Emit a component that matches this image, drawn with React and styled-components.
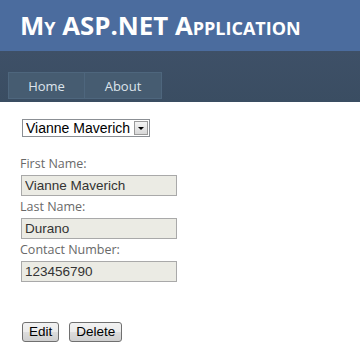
import React from 'react';
import styled, { createGlobalStyle } from 'styled-components';

const GlobalStyle = createGlobalStyle`
  html, body {
    margin: 0;
    padding: 0;
    background: #fff;
  }
  body {
    font-family: "Open Sans", "DejaVu Sans", sans-serif;
  }
`

const Header = styled.div`
  height: 51px;
  background: #4b6c9e;
  display: flex;
  align-items: flex-start;
`

const Title = styled.h1`
  margin: 0;
  padding: 8px 0 0 20px;
  color: #fff;
  font-family: "Open Sans", sans-serif;
  font-weight: 700;
  font-size: 25.8px;
  line-height: 34px;
  font-variant: small-caps;
`

const MenuBar = styled.div`
  height: 51px;
  background: linear-gradient(#3e5067, #3a4d62);
  padding: 21px 0 0 8px;
  box-sizing: border-box;
  display: flex;
  align-items: flex-start;
`

const Tab = styled.a`
  width: 77px;
  height: 27px;
  box-sizing: border-box;
  background: #465c71;
  border: 1px solid #4e667d;
  border-left-width: ${p => (p.first ? '1px' : '0')};
  color: #dde4ec;
  font-size: 13px;
  display: flex;
  align-items: center;
  justify-content: center;
  text-decoration: none;
`

const Main = styled.div`
  padding: 17px 20px 0;
`

const SelectBox = styled.div`
  display: flex;
  align-items: center;
  width: 128px;
  height: 18px;
  box-sizing: border-box;
  border: 1px solid #8b8f94;
  background: #fff;
  margin-left: 2px;
`

const Select = styled.select`
  appearance: none;
  border: none;
  outline: none;
  background: transparent;
  flex: 1;
  min-width: 0;
  padding: 0 0 0 3px;
  font-family: "Liberation Sans", Arial, sans-serif;
  font-size: 14px;
  color: #000;
  height: 16px;
  line-height: 16px;
`

const Arrow = styled.div`
  width: 14px;
  height: 14px;
  margin-right: 1px;
  box-sizing: border-box;
  border: 1px solid #9a9a9a;
  background: linear-gradient(#f4f4f4, #d8d8d8);
  display: flex;
  align-items: center;
  justify-content: center;
  &::after {
    content: '';
    border-left: 3px solid transparent;
    border-right: 3px solid transparent;
    border-top: 3px solid #000;
  }
`

const Form = styled.div`
  margin-top: 18px;
  display: flex;
  flex-direction: column;
  align-items: flex-start;
`

const Label = styled.label`
  color: #696969;
  font-size: 12.5px;
  line-height: 17px;
  margin-bottom: 3px;
`

const TextBox = styled.input`
  width: 156px;
  height: 21px;
  box-sizing: border-box;
  margin: 0 0 2px 1px;
  padding: 0 3px;
  border: 1px solid #a9a9a9;
  background: #ebebe4;
  color: #333;
  font-family: "Liberation Sans", Arial, sans-serif;
  font-size: 13.5px;
`

const Buttons = styled.div`
  margin-top: 38px;
  display: flex;
  gap: 10px;
  padding-left: 2px;
`

const Button = styled.button`
  height: 20px;
  padding: 0 6px;
  border: 1px solid #707070;
  border-radius: 3px;
  background: linear-gradient(#f2f2f2 0%, #ebebeb 50%, #dddddd 51%, #cfcfcf 100%);
  font-family: "Liberation Sans", Arial, sans-serif;
  font-size: 13.5px;
  color: #000;
  line-height: 18px;
`

const fields = [
  { label: 'First Name:', value: 'Vianne Maverich' },
  { label: 'Last Name:', value: 'Durano' },
  { label: 'Contact Number:', value: '123456790' },
]

export default function App() {
  return (
    <>
      <GlobalStyle />
      <Header>
        <Title>My ASP.NET Application</Title>
      </Header>
      <MenuBar>
        <Tab first href="#">Home</Tab>
        <Tab href="#">About</Tab>
      </MenuBar>
      <Main>
        <SelectBox>
          <Select defaultValue="vm">
            <option value="vm">Vianne Maverich</option>
          </Select>
          <Arrow />
        </SelectBox>
        <Form>
          {fields.map(f => (
            <React.Fragment key={f.label}>
              <Label>{f.label}</Label>
              <TextBox readOnly value={f.value} />
            </React.Fragment>
          ))}
        </Form>
        <Buttons>
          <Button>Edit</Button>
          <Button>Delete</Button>
        </Buttons>
      </Main>
    </>
  )
}
